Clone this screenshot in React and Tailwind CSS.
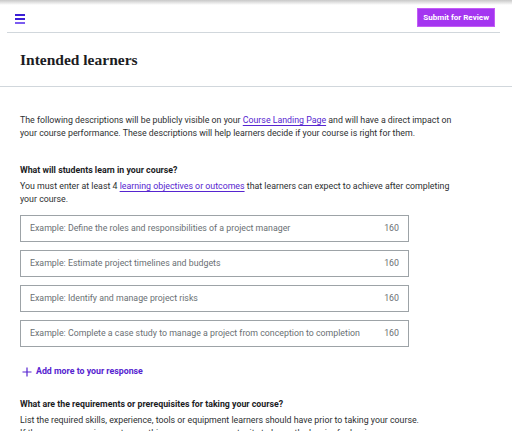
import React from 'react';

const objectives = [
  'Example: Define the roles and responsibilities of a project manager',
  'Example: Estimate project timelines and budgets',
  'Example: Identify and manage project risks',
  'Example: Complete a case study to manage a project from conception to completion',
];

const ObjectiveInput = ({ placeholder }) => (
  <div className="flex items-center justify-between h-[27px] w-[389px] border border-[#9da3a7] pl-[9px] pr-[9px]">
    <span className="text-[#6a6f73]">{placeholder}</span>
    <span className="text-[#6a6f73]">160</span>
  </div>
);

export default function App() {
  return (
    <div className="w-[512px] h-[431px] overflow-hidden bg-white text-[#2d2f31] font-['Roboto',sans-serif] text-[8.8px]">
      {/* top shadow */}
      <div className="h-[5px] bg-gradient-to-b from-[#c8c8c8] to-white" />

      {/* Header */}
      <div className="mx-[7px] mr-[12px] h-[28px] flex items-center justify-between border-b border-[#d1d7dc]">
        <button className="ml-[8px] flex flex-col gap-[2px] w-[10px]">
          <span className="block h-[2px] w-[10px] bg-[#3b1fd6]" />
          <span className="block h-[2px] w-[10px] bg-[#3b1fd6]" />
          <span className="block h-[2px] w-[10px] bg-[#7b5cf0]" />
        </button>
        <button className="mr-[5px] mb-[2px] h-[19px] px-[5px] bg-[#a435f0] border border-[#c35cf5] text-white font-bold text-[8px]">
          Submit for Review
        </button>
      </div>

      {/* Title */}
      <div className="h-[54px] flex items-center px-[20px] border-b border-[#d1d7dc]">
        <h1 className="font-['Liberation_Serif',serif] font-bold text-[15.5px] text-[#1c1d1f]">
          Intended learners
        </h1>
      </div>

      <div className="px-[20px] pt-[27px]">
        <p className="leading-[13px] w-[440px]">
          The following descriptions will be publicly visible on your{' '}
          <a className="text-[#5624d0] underline underline-offset-2">Course Landing Page</a> and will have a direct impact on
          your course performance. These descriptions will help learners decide if your course is right for them.
        </p>

        <h2 className="mt-[24px] font-bold leading-[13px] text-[#1c1d1f]">What will students learn in your course?</h2>
        <p className="mt-[3px] leading-[13px] w-[440px]">
          You must enter at least 4{' '}
          <a className="text-[#5624d0] underline underline-offset-2">learning objectives or outcomes</a> that learners can expect to achieve after completing
          your course.
        </p>

        <div className="mt-[9px] flex flex-col gap-[8px]">
          {objectives.map((o) => (
            <ObjectiveInput key={o} placeholder={o} />
          ))}
        </div>

        <button className="mt-[18px] ml-[2px] flex items-center gap-[4px] text-[#5624d0] font-bold">
          <svg width="10" height="10" viewBox="0 0 10 10" fill="none" stroke="#5624d0" strokeWidth="1.2">
            <path d="M5 0.5v9M0.5 5h9" />
          </svg>
          <span>Add more to your response</span>
        </button>

        <h2 className="mt-[20px] font-bold leading-[13px] text-[#1c1d1f]">What are the requirements or prerequisites for taking your course?</h2>
        <p className="mt-[3px] leading-[13px] w-[460px]">
          List the required skills, experience, tools or equipment learners should have prior to taking your course.
          <br />
          If there are no requirements, use this space as an opportunity to lower the barrier for beginners.
        </p>
      </div>
    </div>
  );
}
